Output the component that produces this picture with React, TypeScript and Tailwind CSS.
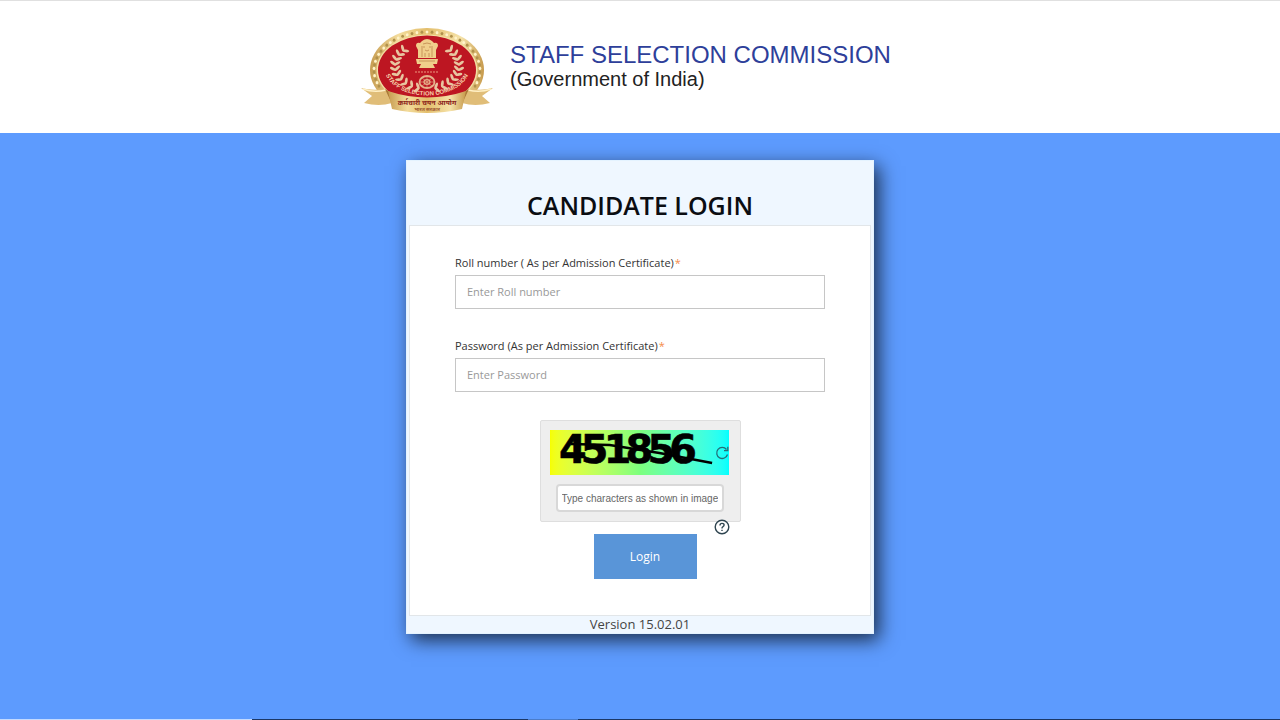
import type { ReactNode } from "react";

const BEADS = Array.from({ length: 43 }, (_, i) => {
  const a = ((155 + (i * 230) / 42) * Math.PI) / 180;
  return { x: 66 + 53 * Math.cos(a), y: 42 + 38 * Math.sin(a) };
});

const LEAVES = Array.from({ length: 10 }, (_, i) => {
  const a = ((-42 + i * 13) * Math.PI) / 180;
  return { x: 32 * Math.cos(a), y: 38 + 23 * Math.sin(a), r: (a * 180) / Math.PI };
});

function Emblem() {
  return (
    <svg viewBox="0 0 132 86" className="h-[86px] w-[132px] shrink-0" role="img" aria-label="Staff Selection Commission emblem">
      <defs>
        <linearGradient id="gold" x1="0" x2="1" y1="0" y2="0">
          <stop offset="0" stopColor="#c79c50" />
          <stop offset="0.25" stopColor="#f3dc9c" />
          <stop offset="0.5" stopColor="#e3be6c" />
          <stop offset="0.8" stopColor="#f5e2a8" />
          <stop offset="1" stopColor="#c79a4c" />
        </linearGradient>
        <path id="ring" d="M22 36 C24 78 108 78 110 36" />
      </defs>

      {/* Medallion */}
      <ellipse cx="66" cy="42" rx="57" ry="42" fill="url(#gold)" />
      {BEADS.map((b, i) => (
        <ellipse key={i} cx={b.x} cy={b.y} rx="1.4" ry="1.6" fill={i % 2 ? "#fff3c9" : "#b0914c"} />
      ))}
      <ellipse cx="66" cy="42" rx="50.5" ry="35.5" fill="#f3dfa4" />
      <ellipse cx="66" cy="42" rx="49" ry="34.5" fill="#bd1622" />

      {/* Laurel */}
      {[1, -1].map((side) => (
        <g key={side} transform={`translate(66 0) scale(${side} 1)`}>
          {LEAVES.map((l, i) => (
            <g key={i} transform={`translate(${l.x} ${l.y}) rotate(${l.r})`} fill="#e8c5a0">
              <ellipse cx="2.6" cy="0" rx="3.4" ry="1.4" transform="rotate(-35)" />
              <ellipse cx="-2.6" cy="0" rx="3.4" ry="1.4" transform="rotate(35)" />
            </g>
          ))}
        </g>
      ))}

      {/* Lion capital */}
      <g fill="#f0cf8b">
        <path d="M61 13 Q66 9 71 13 L73 15 Q77 14 77 18 L75 22 L75 30 L57 30 L57 22 L55 18 Q55 14 59 15 Z" />
        <path d="M55 31 H77 L76 36 H56 Z" />
        <path d="M60 36 H72 L74 40 H58 Z" />
      </g>
      <path d="M62 16 Q66 14 70 16 M62 19 H64 M68 19 H70 M64 22 Q66 24 68 22 M61 18 V29 M71 18 V29 M64 25 V29 M68 25 V29 M58 33 H74" fill="none" stroke="#b87b45" strokeWidth="0.7" />
      <path d="M54 44 H78" stroke="#dd6f60" strokeWidth="1.5" strokeDasharray="2 1" />

      {/* Wheel */}
      <g fill="none" stroke="#e5b18b">
        <ellipse cx="66" cy="54" rx="7.5" ry="6" strokeWidth="1.8" />
        <ellipse cx="66" cy="54" rx="3" ry="2.3" strokeWidth="1.2" />
        <path d="M59 54 H73 M66 48.5 V59.5 M61 50 L71 58 M71 50 L61 58" strokeWidth="0.6" />
      </g>

      <text fill="#f7cfaa" fontSize="6" fontWeight="700" className="font-['Liberation_Sans',sans-serif]">
        <textPath href="#ring" startOffset="50%" textAnchor="middle">STAFF SELECTION COMMISSION</textPath>
      </text>

      {/* Ribbon */}
      <path d="M0 60 Q11 63 24 61 L31 75 Q18 79 3 75 L11 68 Z" fill="#e0bd78" />
      <path d="M132 60 Q121 63 108 61 L101 75 Q114 79 129 75 L121 68 Z" fill="#e0bd78" />
      <path d="M2 61 Q13 65 25 62 M130 61 Q119 65 107 62" fill="none" stroke="#fff0c5" strokeWidth="1.5" />
      <path d="M24 61 L31 65 V76 Z M108 61 L101 65 V76 Z" fill="#a97836" />
      <path d="M27 63 Q66 76 105 63 L101 81 Q66 89 31 81 Z" fill="url(#gold)" />
      <text x="66" y="77" textAnchor="middle" fill="#8c251b" fontSize="7" fontWeight="700" className="font-['Noto_Sans','Liberation_Sans',sans-serif]">
        कर्मचारी चयन आयोग
      </text>
      <text x="66" y="83" textAnchor="middle" fill="#9c5630" fontSize="5" fontWeight="700" className="font-['Noto_Sans','Liberation_Sans',sans-serif]">
        भारत सरकार
      </text>
    </svg>
  );
}

function Field({ id, type, label, placeholder }: { id: string; type: string; label: ReactNode; placeholder: string }) {
  return (
    <div className="w-full">
      <label htmlFor={id} className="block text-[11px] leading-4 text-[#333]">
        {label}
        <span className="ml-px text-[#f58a4b]">*</span>
      </label>
      <input
        id={id}
        type={type}
        placeholder={placeholder}
        className="mt-1 block h-[34px] w-full border border-[#c6c6c6] bg-white px-[11px] pb-0.5 text-[11px] text-[#333] placeholder:text-[#999]"
      />
    </div>
  );
}

function Captcha() {
  return (
    <div className="relative mt-7 w-[201px] rounded-xs border border-[#dedede] bg-[#eee] py-[9px] pr-[11px] pl-[9px]">
      <div className="relative flex h-[45px] w-full items-center justify-end bg-linear-to-r from-[#f6ff00] via-[#7dff7d] to-[#00ffff]">
        <svg viewBox="0 0 180 45" className="absolute inset-0 h-full w-full overflow-visible" role="img" aria-label="Captcha 451856">
          <text x="9 31 54 76 98 120" y="33" fontSize="40" fontWeight="700" fill="#000" stroke="#000" strokeWidth="0.6" className="font-['DejaVu_Sans',sans-serif]">
            451856
          </text>
          <path d="M21 14 L60 15 L110 23 L163 33" fill="none" stroke="#000" strokeWidth="2.5" />
        </svg>
        <button type="button" aria-label="Refresh captcha" className="relative">
          <svg viewBox="0 0 14 14" className="h-[14px] w-[14px]" fill="none" stroke="#246f78" strokeWidth="1.3">
            <path d="M11.5 3.5 A5.5 5.5 0 1 0 12.5 8.5" />
            <path d="M12.8 0.8 V4.6 H9" />
          </svg>
        </button>
      </div>
      <input
        type="text"
        aria-label="Type characters as shown in image"
        placeholder="Type characters as shown in image"
        className="mt-[9px] ml-1.5 block h-7 w-[168px] rounded-[4px] border-2 border-[#d8d8d8] bg-white px-1 font-['Liberation_Sans',sans-serif] text-[10px] text-[#333] placeholder:text-[#666]"
      />
      <button type="button" aria-label="Help" className="absolute right-2.5 -bottom-3.5">
        <svg viewBox="0 0 16 16" className="h-4 w-4" fill="none" stroke="#2f4550">
          <circle cx="8" cy="8" r="6.8" fill="#fff" strokeWidth="1.4" />
          <path d="M6 6.4 Q6 4.4 8 4.4 Q10.1 4.4 10.1 6.1 Q10.1 7.2 8.8 7.8 Q8 8.2 8 9.4 M8 10.8 V12" strokeWidth="1.4" />
        </svg>
      </button>
    </div>
  );
}

export default function App() {
  return (
    <div className="flex min-h-screen flex-col bg-[#5d9bfe] font-['Open_Sans',sans-serif]">
      <header className="flex h-[133px] items-center justify-center gap-[17px] border-t border-[#e0e0e0] bg-white pt-2 pr-7">
        <Emblem />
        <div className="pb-2 font-['Liberation_Sans',sans-serif] whitespace-nowrap">
          <h1 className="text-[24px] leading-6 text-[#2e3f9a]">STAFF SELECTION COMMISSION</h1>
          <p className="text-[20px] leading-6 text-[#222]">(Government of India)</p>
        </div>
      </header>

      <main className="flex flex-1 justify-center pt-[27px] pb-20">
        <form className="flex w-[468px] flex-col self-start border border-[#e4f3ff] bg-[#eff7ff] px-0.5 shadow-[5px_6px_18px_0px_rgba(0,0,0,0.7)]" onSubmit={(e) => e.preventDefault()}>
          <h2 className="pt-[26px] pb-0.5 text-center text-[25px] leading-9 font-semibold text-[#0b0d12]">CANDIDATE LOGIN</h2>

          <div className="flex flex-col items-center border border-[#e2e6e9] bg-white px-[45px] pt-[29px] pb-9">
            <div className="flex w-full flex-col gap-[29px]">
              <Field id="roll" type="text" label="Roll number ( As per Admission Certificate)" placeholder="Enter Roll number" />
              <Field id="password" type="password" label="Password (As per Admission Certificate)" placeholder="Enter Password" />
            </div>
            <Captcha />
            <button type="submit" className="mt-3 ml-2.5 h-[45px] w-[103px] bg-[#5995d8] text-[12px] text-white">
              Login
            </button>
          </div>

          <p className="text-center text-[13px] leading-[17px] text-[#444]">Version 15.02.01</p>
        </form>
      </main>

      {/* Thin status strip along the bottom edge */}
      <div className="flex h-px bg-[#1b3765]">
        <div className="w-[252px] bg-[#c3daff]" />
        <div className="ml-[276px] w-[50px] bg-[#4b7cc9]" />
      </div>
    </div>
  );
}
